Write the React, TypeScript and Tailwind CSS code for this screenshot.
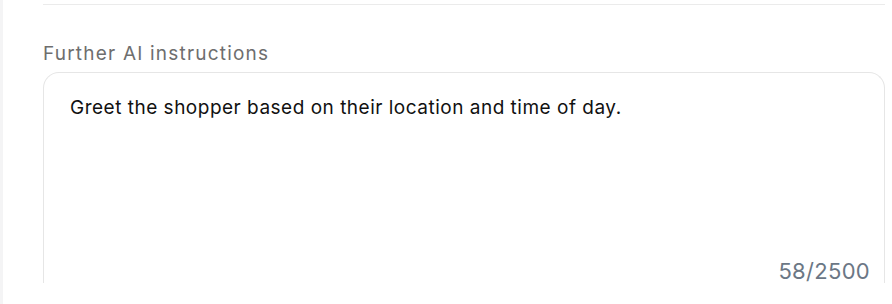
export default function App() {
    const text = "Greet the shopper based on their location and time of day.";

    return (
        <div className="flex h-[304px] w-full overflow-hidden bg-white font-['Inter',sans-serif]">
            <div className="w-[3px] shrink-0 bg-[#f4f4f5]" />
            <div className="flex min-w-0 flex-1 flex-col pl-[40px] pr-[7px]">
                <div className="mt-[4px] border-t border-[#ebebeb]" />
                <p className="mt-[37px] text-[19px] leading-[24px] tracking-[1.2px] text-[#6e6e6e]">Further AI instructions</p>
                <div className="mt-[6px] flex h-[211px] flex-col rounded-t-[16px] border border-b-0 border-[#e6e6e6] px-[26px] pt-[22px]">
                    <p className="flex-1 text-[19px] leading-[26px] tracking-[0.5px] text-[#111111]">{text}</p>
                    <p className="-mr-[12px] text-right text-[22px] leading-[24px] tracking-[0.3px] text-[#6b7785]">
                        {text.length}/2500
                    </p>
                </div>
            </div>
        </div>
    );
}
